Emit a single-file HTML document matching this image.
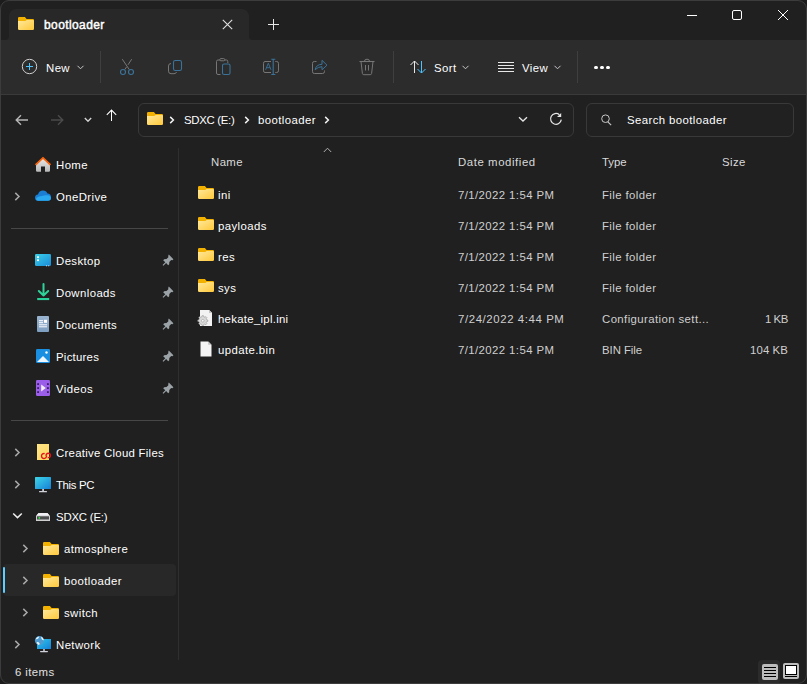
<!DOCTYPE html><html><head><meta charset="utf-8"><style>
*{box-sizing:border-box;margin:0;padding:0}
html,body{width:807px;height:684px;overflow:hidden;background:#1c1c1c}
body{font-family:"Liberation Sans",sans-serif;font-size:11.4px;letter-spacing:0.4px;color:#fff;position:relative}
.a{position:absolute;overflow:visible}
.t{position:absolute;white-space:nowrap;line-height:14px;height:14px}
#win{position:absolute;left:0;top:0;width:807px;height:684px;border-radius:9px;background:#202020;overflow:hidden}
#bord{position:absolute;left:0;top:0;width:807px;height:684px;border:1px solid #3c3c3c;border-radius:9px}
</style></head><body>
<svg width="0" height="0" style="position:absolute"><defs>
<linearGradient id="fg" x1="0" y1="0" x2="1" y2="1"><stop offset="0" stop-color="#ffe99c"/><stop offset="1" stop-color="#ffc83a"/></linearGradient>
<symbol id="folder" viewBox="0 0 16 13">
<path d="M0 1.2Q0 0 1.2 0H6.9L8.6 1.9H14.8Q16 1.9 16 3.1V6H0Z" fill="#f2b100"/>
<path d="M0 4.1H7.3L8.7 3H14.8Q16 3 16 4.2V11.8Q16 13 14.8 13H1.2Q0 13 0 11.8Z" fill="url(#fg)"/>
</symbol>
</defs></svg>
<div id="win">
<div class="a" style="left:0;top:0;width:807px;height:40px;background:#202020"></div>
<div class="a" style="left:5px;top:36px;width:248px;height:4px;background:#282828"></div>
<div class="a" style="left:1px;top:30px;width:8px;height:10px;background:#202020;border-radius:0 0 4px 0"></div>
<div class="a" style="left:249px;top:30px;width:8px;height:10px;background:#202020;border-radius:0 0 0 4px"></div>
<div class="a" style="left:9px;top:9px;width:240px;height:32px;background:#282828;border-radius:7px 7px 0 0"></div>
<svg class="a" style="left:18px;top:17px" width="16" height="13" viewBox="0 0 16 13"><use href="#folder"/></svg>
<div class="t" style="left:44px;top:18px;color:#fff;font-weight:normal;letter-spacing:0.4px;font-size:12px;-webkit-text-stroke:0.45px #fff">bootloader</div>
<svg class="a" style="left:222px;top:19px" width="11" height="11" viewBox="0 0 11 11"><path d="M0.8 0.8L10.2 10.2M10.2 0.8L0.8 10.2" stroke="#e0e0e0" stroke-width="1.1"/></svg>
<svg class="a" style="left:268px;top:19px" width="12" height="12" viewBox="0 0 12 12"><path d="M5.5 0V11M0 5.5H11" stroke="#e8e8e8" stroke-width="1"/></svg>
<div class="a" style="left:687px;top:15px;width:10px;height:1px;background:#fff"></div>
<div class="a" style="left:732px;top:10px;width:10px;height:10px;border:1px solid #fff;border-radius:2px"></div>
<svg class="a" style="left:777px;top:9px" width="12" height="12" viewBox="0 0 12 12"><path d="M1 1L11 11M11 1L1 11" stroke="#fff" stroke-width="1"/></svg>
<div class="a" style="left:0;top:40px;width:807px;height:54px;background:#2c2c2c"></div>
<div class="a" style="left:0;top:94px;width:807px;height:1px;background:#3a3a3a"></div>
<svg class="a" style="left:21px;top:58px" width="17" height="17" viewBox="0 0 17 17"><circle cx="8.5" cy="8.5" r="7.2" fill="none" stroke="#d0d0d0" stroke-width="1"/><path d="M8.5 5V12M5 8.5H12" stroke="#4cc2ff" stroke-width="1"/></svg>
<div class="t" style="left:46px;top:61px;color:#fff;">New</div>
<svg class="a" style="left:77px;top:65px" width="7" height="5" viewBox="0 0 7 5"><path d="M0.5 0.8L3.5 3.8L6.5 0.8" fill="none" stroke="#c8c8c8" stroke-width="1"/></svg>
<div class="a" style="left:100px;top:51px;width:1px;height:32px;background:#3f3f3f"></div>
<div class="a" style="left:393px;top:51px;width:1px;height:32px;background:#3f3f3f"></div>
<div class="a" style="left:577px;top:51px;width:1px;height:32px;background:#3f3f3f"></div>
<svg class="a" style="left:118px;top:57px" width="18" height="20" viewBox="0 0 18 20"><path d="M4.3 2.2L11.3 12.6M13.7 2.2L10 7.8M8.6 9.9L6.7 12.6" stroke="#767676" stroke-width="1" fill="none"/><circle cx="5" cy="15" r="2.5" fill="none" stroke="#3a7299" stroke-width="1.1"/><circle cx="13" cy="15" r="2.5" fill="none" stroke="#3a7299" stroke-width="1.1"/></svg>
<svg class="a" style="left:166px;top:57px" width="18" height="20" viewBox="0 0 18 20"><path d="M5 6.5Q2.5 6.5 2.5 9V14.2Q2.5 16.7 5 16.7H8Q10.2 16.7 10.5 15" stroke="#767676" stroke-width="1" fill="none"/><rect x="7.5" y="3.5" width="8" height="10" rx="1.8" fill="none" stroke="#3a7299" stroke-width="1.1"/></svg>
<svg class="a" style="left:214px;top:57px" width="18" height="20" viewBox="0 0 18 20"><path d="M6.5 17.5H4Q2.5 17.5 2.5 16V4.5Q2.5 3 4 3H12.5Q13.8 3 13.8 4.5V6" stroke="#767676" stroke-width="1" fill="none"/><rect x="5.8" y="1.6" width="5" height="2.2" rx="1.1" fill="#2c2c2c" stroke="#767676" stroke-width="1"/><rect x="8.5" y="7" width="7.5" height="10.5" rx="1.6" fill="none" stroke="#3a7299" stroke-width="1.1"/></svg>
<svg class="a" style="left:261px;top:57px" width="20" height="20" viewBox="0 0 20 20"><path d="M10 4.5H4Q2.5 4.5 2.5 6.3V13.8Q2.5 15.5 4 15.5H10M14.3 4.5H15.5Q17.5 4.5 17.5 6.3V13.8Q17.5 15.5 15.5 15.5H14.3" stroke="#767676" stroke-width="1" fill="none"/><path d="M12.2 2.3V17.5M10.3 2.3H14.3M10.3 17.5H14.3" stroke="#3a7299" stroke-width="1.1" fill="none"/><path d="M4.6 12.8L7.3 6.2L10 12.8M5.5 10.7H9.1" stroke="#3a7299" stroke-width="0.9" fill="none"/></svg>
<svg class="a" style="left:310px;top:57px" width="20" height="20" viewBox="0 0 20 20"><path d="M6.5 4.5H4.3Q2.5 4.5 2.5 6.3V14.7Q2.5 16.5 4.3 16.5H12.5Q14.5 16.5 14.5 14.5V13.5" stroke="#767676" stroke-width="1" fill="none"/><path d="M5.2 12.7Q6 7.5 12 7.3V3.3L17 8.2L12 12.8V9.7Q8 9.7 5.2 12.7Z" stroke="#3a7299" stroke-width="1" fill="none" stroke-linejoin="round"/></svg>
<svg class="a" style="left:358px;top:57px" width="18" height="20" viewBox="0 0 18 20"><path d="M1.5 4.5H16.5" stroke="#767676" stroke-width="1.1"/><path d="M6.5 4.2Q6.5 2.2 9 2.2Q11.5 2.2 11.5 4.2" stroke="#767676" stroke-width="1" fill="none"/><path d="M3 4.5L4.4 16.5Q4.6 17.7 5.8 17.7H12.2Q13.4 17.7 13.6 16.5L15 4.5" stroke="#767676" stroke-width="1" fill="none"/><path d="M7.5 8V13.5M10.5 8V13.5" stroke="#767676" stroke-width="1"/></svg>
<svg class="a" style="left:408px;top:59px" width="20" height="16" viewBox="0 0 20 16"><path d="M6.5 14V2M2.5 6L6.5 2L10.5 6" stroke="#e8e8e8" stroke-width="1" fill="none"/><path d="M13.5 2V14M9.5 10L13.5 14L17.5 10" stroke="#4cc2ff" stroke-width="1" fill="none"/></svg>
<div class="t" style="left:434px;top:61px;color:#fff;">Sort</div>
<svg class="a" style="left:462px;top:65px" width="7" height="5" viewBox="0 0 7 5"><path d="M0.5 0.8L3.5 3.8L6.5 0.8" fill="none" stroke="#c8c8c8" stroke-width="1"/></svg>
<svg class="a" style="left:498px;top:61px" width="16" height="12" viewBox="0 0 16 12"><path d="M0 1.5H16M0 4.5H16M0 7.5H16M0 10.5H16" stroke="#e8e8e8" stroke-width="1"/></svg>
<div class="t" style="left:522px;top:61px;color:#fff;">View</div>
<svg class="a" style="left:554px;top:65px" width="7" height="5" viewBox="0 0 7 5"><path d="M0.5 0.8L3.5 3.8L6.5 0.8" fill="none" stroke="#c8c8c8" stroke-width="1"/></svg>
<div class="a" style="left:594px;top:66px;width:4px;height:3px;border-radius:1.5px;background:#fff"></div>
<div class="a" style="left:600px;top:66px;width:4px;height:3px;border-radius:1.5px;background:#fff"></div>
<div class="a" style="left:606px;top:66px;width:4px;height:3px;border-radius:1.5px;background:#fff"></div>
<svg class="a" style="left:15px;top:114px" width="14" height="12" viewBox="0 0 14 12"><path d="M13 6H1.5M6 1.2L1.2 6L6 10.8" stroke="#b4b4b4" stroke-width="1.4" fill="none"/></svg>
<svg class="a" style="left:50px;top:114px" width="14" height="12" viewBox="0 0 14 12"><path d="M1 6H12.5M8 1.2L12.8 6L8 10.8" stroke="#4a4a4a" stroke-width="1.4" fill="none"/></svg>
<svg class="a" style="left:84px;top:117px" width="8" height="6" viewBox="0 0 8 6"><path d="M0.8 1L4 4.2L7.2 1" fill="none" stroke="#d0d0d0" stroke-width="1.4"/></svg>
<svg class="a" style="left:106px;top:109px" width="12" height="12" viewBox="0 0 12 12"><path d="M5.5 12V1.2M0.8 5.8L5.5 1.1L10.2 5.8" stroke="#fff" stroke-width="1.05" fill="none"/></svg>
<div class="a" style="left:138px;top:103px;width:436px;height:34px;border:1px solid #393939;border-radius:6px;background:#212121"></div>
<svg class="a" style="left:147px;top:112px" width="16" height="13" viewBox="0 0 16 13"><use href="#folder"/></svg>
<svg class="a" style="left:169px;top:116px" width="6" height="8" viewBox="0 0 6 8"><path d="M1.2 0.9L4.4 4L1.2 7.1" fill="none" stroke="#f0f0f0" stroke-width="1.5"/></svg>
<div class="t" style="left:184px;top:113px;color:#fff;letter-spacing:-0.3px">SDXC (E:)</div>
<svg class="a" style="left:244px;top:116px" width="6" height="8" viewBox="0 0 6 8"><path d="M1.2 0.9L4.4 4L1.2 7.1" fill="none" stroke="#f0f0f0" stroke-width="1.5"/></svg>
<div class="t" style="left:258px;top:113px;color:#fff;">bootloader</div>
<svg class="a" style="left:324px;top:116px" width="6" height="8" viewBox="0 0 6 8"><path d="M1.2 0.9L4.4 4L1.2 7.1" fill="none" stroke="#f0f0f0" stroke-width="1.5"/></svg>
<svg class="a" style="left:518px;top:116px" width="10" height="6" viewBox="0 0 10 6"><path d="M1 1.2L5 5L9 1.2" fill="none" stroke="#e6e6e6" stroke-width="1.3"/></svg>
<svg class="a" style="left:549px;top:112px" width="14" height="14" viewBox="0 0 14 14"><path d="M12.3 7.7A5.4 5.4 0 1 1 10.4 2.7" fill="none" stroke="#e6e6e6" stroke-width="1.25"/><path d="M12.2 1L12.2 4.9L8 4.9Z" fill="#e6e6e6"/></svg>
<div class="a" style="left:586px;top:103px;width:208px;height:34px;border:1px solid #393939;border-radius:6px;background:#212121"></div>
<svg class="a" style="left:600px;top:114px" width="12" height="12" viewBox="0 0 12 12"><circle cx="5.5" cy="4.7" r="3.8" fill="none" stroke="#c8c8c8" stroke-width="1"/><path d="M7.8 7.8L11.2 11.2" stroke="#c8c8c8" stroke-width="1.1"/></svg>
<div class="t" style="left:627px;top:113px;color:#fff;">Search bootloader</div>
<div class="a" style="left:178px;top:148px;width:1px;height:512px;background:#2f2f2f"></div>
<div class="a" style="left:11px;top:228px;width:157px;height:1px;background:#474747"></div>
<div class="a" style="left:11px;top:420px;width:157px;height:1px;background:#474747"></div>
<div class="a" style="left:3px;top:564px;width:173px;height:32px;background:#282828;border-radius:4px"></div>
<div class="a" style="left:3px;top:567px;width:2px;height:26px;background:#60cdff;border-radius:1px"></div>
<div class="t" style="left:56px;top:158px;color:#fff;">Home</div>
<div class="t" style="left:56px;top:190px;color:#fff;">OneDrive</div>
<svg class="a" style="left:14px;top:192px" width="7" height="9" viewBox="0 0 7 9"><path d="M1.3 0.9L5 4.5L1.3 8.1" fill="none" stroke="#a8a8a8" stroke-width="1.5"/></svg>
<div class="t" style="left:56px;top:254px;color:#fff;">Desktop</div>
<svg class="a" style="left:162px;top:254px" width="12" height="12" viewBox="0 0 12 12"><path d="M6.8 0.6L11.4 5.2L10.4 6.2L9.2 6L7.3 7.9L7.2 10.2L6.2 11.2L4.1 9.1L1.4 11.8L0.6 11L3.3 8.3L1.2 6.2L2.2 5.2L4.5 5.1L6.4 3.2L6.2 2Z" fill="#9ca3a8"/></svg>
<div class="t" style="left:56px;top:286px;color:#fff;">Downloads</div>
<svg class="a" style="left:162px;top:286px" width="12" height="12" viewBox="0 0 12 12"><path d="M6.8 0.6L11.4 5.2L10.4 6.2L9.2 6L7.3 7.9L7.2 10.2L6.2 11.2L4.1 9.1L1.4 11.8L0.6 11L3.3 8.3L1.2 6.2L2.2 5.2L4.5 5.1L6.4 3.2L6.2 2Z" fill="#9ca3a8"/></svg>
<div class="t" style="left:56px;top:318px;color:#fff;">Documents</div>
<svg class="a" style="left:162px;top:318px" width="12" height="12" viewBox="0 0 12 12"><path d="M6.8 0.6L11.4 5.2L10.4 6.2L9.2 6L7.3 7.9L7.2 10.2L6.2 11.2L4.1 9.1L1.4 11.8L0.6 11L3.3 8.3L1.2 6.2L2.2 5.2L4.5 5.1L6.4 3.2L6.2 2Z" fill="#9ca3a8"/></svg>
<div class="t" style="left:56px;top:350px;color:#fff;letter-spacing:0.25px;">Pictures</div>
<svg class="a" style="left:162px;top:350px" width="12" height="12" viewBox="0 0 12 12"><path d="M6.8 0.6L11.4 5.2L10.4 6.2L9.2 6L7.3 7.9L7.2 10.2L6.2 11.2L4.1 9.1L1.4 11.8L0.6 11L3.3 8.3L1.2 6.2L2.2 5.2L4.5 5.1L6.4 3.2L6.2 2Z" fill="#9ca3a8"/></svg>
<div class="t" style="left:56px;top:382px;color:#fff;">Videos</div>
<svg class="a" style="left:162px;top:382px" width="12" height="12" viewBox="0 0 12 12"><path d="M6.8 0.6L11.4 5.2L10.4 6.2L9.2 6L7.3 7.9L7.2 10.2L6.2 11.2L4.1 9.1L1.4 11.8L0.6 11L3.3 8.3L1.2 6.2L2.2 5.2L4.5 5.1L6.4 3.2L6.2 2Z" fill="#9ca3a8"/></svg>
<div class="t" style="left:56px;top:446px;color:#fff;letter-spacing:0.27px;">Creative Cloud Files</div>
<svg class="a" style="left:14px;top:448px" width="7" height="9" viewBox="0 0 7 9"><path d="M1.3 0.9L5 4.5L1.3 8.1" fill="none" stroke="#a8a8a8" stroke-width="1.5"/></svg>
<div class="t" style="left:56px;top:478px;color:#fff;letter-spacing:-0.35px;">This PC</div>
<svg class="a" style="left:14px;top:480px" width="7" height="9" viewBox="0 0 7 9"><path d="M1.3 0.9L5 4.5L1.3 8.1" fill="none" stroke="#a8a8a8" stroke-width="1.5"/></svg>
<div class="t" style="left:56px;top:510px;color:#fff;letter-spacing:-0.2px;">SDXC (E:)</div>
<svg class="a" style="left:12px;top:512px" width="11" height="7" viewBox="0 0 11 7"><path d="M1.2 1.5L5.5 5.6L9.8 1.5" fill="none" stroke="#ececec" stroke-width="1.5"/></svg>
<div class="t" style="left:56px;top:638px;color:#fff;">Network</div>
<svg class="a" style="left:14px;top:640px" width="7" height="9" viewBox="0 0 7 9"><path d="M1.3 0.9L5 4.5L1.3 8.1" fill="none" stroke="#a8a8a8" stroke-width="1.5"/></svg>
<div class="t" style="left:64px;top:542px;color:#fff;">atmosphere</div>
<svg class="a" style="left:22px;top:544px" width="7" height="9" viewBox="0 0 7 9"><path d="M1.3 0.9L5 4.5L1.3 8.1" fill="none" stroke="#a8a8a8" stroke-width="1.5"/></svg>
<svg class="a" style="left:43px;top:542px" width="16" height="13" viewBox="0 0 16 13"><use href="#folder"/></svg>
<div class="t" style="left:64px;top:574px;color:#fff;">bootloader</div>
<svg class="a" style="left:22px;top:576px" width="7" height="9" viewBox="0 0 7 9"><path d="M1.3 0.9L5 4.5L1.3 8.1" fill="none" stroke="#a8a8a8" stroke-width="1.5"/></svg>
<svg class="a" style="left:43px;top:574px" width="16" height="13" viewBox="0 0 16 13"><use href="#folder"/></svg>
<div class="t" style="left:64px;top:606px;color:#fff;">switch</div>
<svg class="a" style="left:22px;top:608px" width="7" height="9" viewBox="0 0 7 9"><path d="M1.3 0.9L5 4.5L1.3 8.1" fill="none" stroke="#a8a8a8" stroke-width="1.5"/></svg>
<svg class="a" style="left:43px;top:606px" width="16" height="13" viewBox="0 0 16 13"><use href="#folder"/></svg>
<svg class="a" style="left:35px;top:156px" width="16" height="16" viewBox="0 0 16 16"><defs><linearGradient id="hg" x1="0" y1="0" x2="0" y2="1"><stop offset="0" stop-color="#e8e8e8"/><stop offset="1" stop-color="#b8b8b8"/></linearGradient></defs><path d="M1 8.5L8 2.2L15 8.5V14.5Q15 15.7 13.8 15.7H10V10.5H6V15.7H2.2Q1 15.7 1 14.5Z" fill="url(#hg)"/><path d="M0.5 8.8L8 1.8L15.5 8.8" fill="none" stroke="#f7630c" stroke-width="1.8" stroke-linejoin="round"/></svg>
<svg class="a" style="left:35px;top:190px" width="16" height="11" viewBox="0 0 16 11"><path d="M3 10.8Q0 10.8 0 7.8Q0 5 3 4.6Q4 0.5 8 0.5Q11.2 0.5 12.5 3.5Q16 3.8 16 7.3Q16 10.8 12.5 10.8Z" fill="#1a7fd4"/><path d="M3 10.8Q1 10.8 1 8.8Q3 6 7 6Q9 5 12 5.2Q16 5.5 16 8Q16 10.8 13 10.8Z" fill="#2aa8f0"/></svg>
<svg class="a" style="left:35px;top:254px" width="16" height="13" viewBox="0 0 16 13"><defs><linearGradient id="dg" x1="0" y1="0" x2="1" y2="1"><stop offset="0" stop-color="#3ad0e8"/><stop offset="1" stop-color="#1a8ad8"/></linearGradient></defs><rect x="0" y="0" width="16" height="12" rx="1.2" fill="url(#dg)"/><rect x="2" y="2.3" width="2" height="1.8" fill="#fff"/><rect x="2" y="5.3" width="2" height="1.8" fill="#fff"/><rect x="11" y="11.3" width="1" height="1" fill="#ddd"/><rect x="13.2" y="11.3" width="1" height="1" fill="#ddd"/></svg>
<svg class="a" style="left:37px;top:283px" width="13" height="18" viewBox="0 0 13 18"><path d="M6.5 1V12.5M1.8 8L6.5 12.5L11.2 8" fill="none" stroke="#2fd39a" stroke-width="2" stroke-linecap="round" stroke-linejoin="round"/><rect x="0.2" y="15" width="12" height="2.1" fill="#2ad09a"/></svg>
<svg class="a" style="left:37px;top:316px" width="12" height="16" viewBox="0 0 12 16"><defs><linearGradient id="docg" x1="0" y1="0" x2="0" y2="1"><stop offset="0" stop-color="#9ab4d0"/><stop offset="1" stop-color="#7d9ec0"/></linearGradient></defs><rect x="0" y="0" width="12" height="16" rx="1" fill="url(#docg)"/><rect x="2" y="4.2" width="4" height="1" fill="#fff"/><rect x="2" y="6.2" width="4" height="1" fill="#fff"/><rect x="7" y="3.8" width="3" height="3" fill="#fff"/><rect x="2" y="8.3" width="8" height="1" fill="#fff"/><rect x="2" y="10.3" width="8" height="1" fill="#fff"/></svg>
<svg class="a" style="left:36px;top:349px" width="14" height="14" viewBox="0 0 14 14"><rect x="0" y="0" width="14" height="14" rx="1.2" fill="#1a8ee0"/><path d="M1 13L7 7L13 13Z" fill="#eef6ff"/><circle cx="10.5" cy="3.5" r="1.2" fill="#fff"/></svg>
<svg class="a" style="left:36px;top:380px" width="14" height="16" viewBox="0 0 14 16"><rect x="0" y="0" width="14" height="16" rx="1.2" fill="#9a5ee8"/><g fill="#3a2060"><rect x="1.2" y="3.2" width="1.8" height="1.8"/><rect x="1.2" y="7.2" width="1.8" height="1.8"/><rect x="1.2" y="11.2" width="1.8" height="1.8"/><rect x="11" y="3.2" width="1.8" height="1.8"/><rect x="11" y="7.2" width="1.8" height="1.8"/><rect x="11" y="11.2" width="1.8" height="1.8"/></g><path d="M5.2 4.5L9.8 8L5.2 11.5Z" fill="#f0f0f0"/></svg>
<svg class="a" style="left:37px;top:444px" width="15" height="17" viewBox="0 0 15 17"><defs><linearGradient id="ccg" x1="0" y1="0" x2="1" y2="1"><stop offset="0" stop-color="#ffe68a"/><stop offset="1" stop-color="#ffd65a"/></linearGradient></defs><rect x="0" y="0" width="12" height="16" fill="url(#ccg)"/><path d="M9.46 11.57A2.5 2.5 0 1 1 7.65 9.59" fill="none" stroke="#e3121b" stroke-width="1.4"/><path d="M9.13 11.78A2.2 2.2 0 1 1 10.73 13.53" fill="none" stroke="#e3121b" stroke-width="1.4"/></svg>
<svg class="a" style="left:35px;top:477px" width="16" height="16" viewBox="0 0 16 16"><defs><linearGradient id="pcg" x1="0" y1="0" x2="1" y2="1"><stop offset="0" stop-color="#3dd6e8"/><stop offset="1" stop-color="#1680d8"/></linearGradient></defs><rect x="0" y="0" width="16" height="12" rx="0.6" fill="url(#pcg)"/><rect x="7.2" y="12" width="1.8" height="2.2" fill="#c8c8d0"/><rect x="4" y="14" width="8" height="1.3" rx="0.6" fill="#d0d0d8"/></svg>
<svg class="a" style="left:36px;top:513px" width="14" height="8" viewBox="0 0 14 8"><path d="M2.6 0H11.4L14 3V8H0V3Z" fill="#cfcfd2"/><path d="M2.6 0H11.4L13.6 2.6H0.4Z" fill="#f0f0f4"/><rect x="1" y="3.3" width="12" height="3.2" fill="#4c4c4e"/><circle cx="3.3" cy="4.9" r="0.9" fill="#2cf040"/></svg>
<svg class="a" style="left:35px;top:635px" width="16" height="19" viewBox="0 0 16 19"><defs><linearGradient id="ng" x1="0" y1="0" x2="1" y2="1"><stop offset="0" stop-color="#30c8e8"/><stop offset="1" stop-color="#1680d8"/></linearGradient></defs><rect x="2" y="4" width="14" height="10" fill="url(#ng)"/><rect x="8.2" y="14" width="1.6" height="2" fill="#c8c8d0"/><rect x="5" y="16" width="8" height="1.2" rx="0.6" fill="#d0d0d8"/><g transform="translate(0,1)"><circle cx="4.4" cy="4.6" r="4.5" fill="#4f9bd0"/><path d="M0.6 3.2Q1.5 1.2 3.6 0.4Q4.5 1.5 3.2 2.6Q2 3.4 0.6 3.2ZM1.6 6.2Q3.2 5.8 4.6 7.2Q4.8 8.6 3.8 9Q2.2 8.4 1.6 6.2ZM6.2 0.6Q8.6 1.8 8.9 4.2Q7.6 4.4 6.8 3.2Q6 2 6.2 0.6Z" fill="#eef8ff"/></g></svg>
<div class="t" style="left:211px;top:155px;color:#d9d9d9;">Name</div>
<div class="t" style="left:458px;top:155px;color:#d9d9d9;letter-spacing:0.57px;">Date modified</div>
<div class="t" style="left:602px;top:155px;color:#d9d9d9;letter-spacing:0.0px;">Type</div>
<div class="t" style="left:722px;top:155px;color:#d9d9d9;">Size</div>
<svg class="a" style="left:323px;top:147px" width="9" height="6" viewBox="0 0 9 6"><path d="M0.8 5L4.5 1.2L8.2 5" fill="none" stroke="#b0b0b0" stroke-width="1"/></svg>
<div class="t" style="left:218px;top:188px;color:#fff;">ini</div>
<div class="t" style="left:458px;top:188px;color:#cfcfcf;">7/1/2022 1:54 PM</div>
<div class="t" style="left:602px;top:188px;color:#cfcfcf;">File folder</div>
<svg class="a" style="left:198px;top:186px" width="16" height="13" viewBox="0 0 16 13"><use href="#folder"/></svg>
<div class="t" style="left:218px;top:219px;color:#fff;">payloads</div>
<div class="t" style="left:458px;top:219px;color:#cfcfcf;">7/1/2022 1:54 PM</div>
<div class="t" style="left:602px;top:219px;color:#cfcfcf;">File folder</div>
<svg class="a" style="left:198px;top:217px" width="16" height="13" viewBox="0 0 16 13"><use href="#folder"/></svg>
<div class="t" style="left:218px;top:250px;color:#fff;">res</div>
<div class="t" style="left:458px;top:250px;color:#cfcfcf;">7/1/2022 1:54 PM</div>
<div class="t" style="left:602px;top:250px;color:#cfcfcf;">File folder</div>
<svg class="a" style="left:198px;top:248px" width="16" height="13" viewBox="0 0 16 13"><use href="#folder"/></svg>
<div class="t" style="left:218px;top:281px;color:#fff;">sys</div>
<div class="t" style="left:458px;top:281px;color:#cfcfcf;">7/1/2022 1:54 PM</div>
<div class="t" style="left:602px;top:281px;color:#cfcfcf;">File folder</div>
<svg class="a" style="left:198px;top:279px" width="16" height="13" viewBox="0 0 16 13"><use href="#folder"/></svg>
<div class="t" style="left:218px;top:312px;color:#fff;letter-spacing:0.28px;">hekate_ipl.ini</div>
<div class="t" style="left:458px;top:312px;color:#cfcfcf;letter-spacing:0.6px;">7/24/2022 4:44 PM</div>
<div class="t" style="left:602px;top:312px;color:#cfcfcf;">Configuration sett...</div>
<div class="t" style="left:700px;width:88px;text-align:right;top:312px;color:#cfcfcf;letter-spacing:-0.4px">1 KB</div>
<svg class="a" style="left:197px;top:309px" width="16" height="18" viewBox="0 0 16 18"><path d="M3 1H12.2L15 3.8V17H3Z" fill="#f2f2f2"/><path d="M12 1V4H15" fill="#c4c4c4"/><g transform="translate(5.8,11.8)"><path d="M-0.9 -4.6H0.9L1.2 -3.3L2.6 -2.7L3.7 -3.5L4.9 -2.3L4.1 -1.2L4.6 0.2L5.9 0.5V2.1L4.6 2.4L4 3.7L4.8 4.8L3.6 6L2.5 5.2L1.1 5.8L0.9 7H-0.9L-1.2 5.8L-2.6 5.2L-3.7 6L-4.9 4.8L-4.1 3.7L-4.6 2.4L-5.9 2.1V0.5L-4.6 0.2L-4.1 -1.2L-4.9 -2.3L-3.7 -3.5L-2.6 -2.7L-1.2 -3.3Z" transform="translate(0,-1.2) scale(0.85)" fill="#d8d8d8" stroke="#8a8a8a" stroke-width="0.6"/><circle cx="0" cy="0" r="1.3" fill="#fff" stroke="#8a8a8a" stroke-width="0.5"/></g></svg>
<div class="t" style="left:218px;top:343px;color:#fff;">update.bin</div>
<div class="t" style="left:458px;top:343px;color:#cfcfcf;">7/1/2022 1:54 PM</div>
<div class="t" style="left:602px;top:343px;color:#cfcfcf;letter-spacing:-0.05px;">BIN File</div>
<div class="t" style="left:700px;width:88px;text-align:right;top:343px;color:#cfcfcf;letter-spacing:0.1px">104 KB</div>
<svg class="a" style="left:200px;top:341px" width="12" height="16" viewBox="0 0 12 16"><path d="M0.5 0.5H8.2L11.5 3.8V15.5H0.5Z" fill="#f4f4f4"/><path d="M8.2 0.5V3.8H11.5" fill="#c0c0c0"/></svg>
<div class="t" style="left:15px;top:665px;color:#e0e0e0;">6 items</div>
<div class="a" style="left:758px;top:660px;width:22px;height:24px;border-radius:4px;background:#2b2b2b"></div>
<svg class="a" style="left:762px;top:664px" width="16" height="16" viewBox="0 0 16 16"><rect x="0" y="0" width="16" height="16" rx="2" fill="#bdbdbd"/><path d="M2 3.5H14M2 6.5H14M2 9.5H14M2 12.5H14" stroke="#000" stroke-width="1"/></svg>
<svg class="a" style="left:783px;top:663px" width="16" height="16" viewBox="0 0 16 16"><rect x="0" y="0" width="16" height="16" rx="2" fill="#bdbdbd"/><rect x="2.5" y="2.5" width="11" height="9" fill="#fff" stroke="#000" stroke-width="1"/><path d="M2 13.5H14" stroke="#000" stroke-width="1"/></svg>
</div><div id="bord"></div></body></html>
